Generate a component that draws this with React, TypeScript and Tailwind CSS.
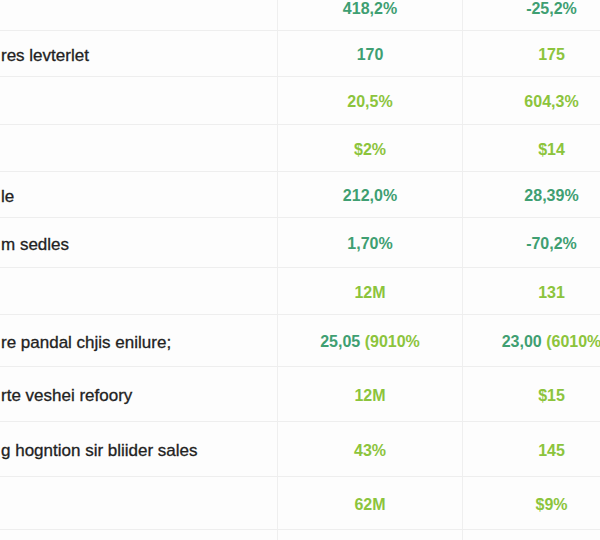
import React from "react";

type Seg = { t: string; c: "teal" | "lime" };
type Row = { label: string; h: string; a: Seg[]; b: Seg[] };

const T = (t: string): Seg[] => [{ t, c: "teal" }];
const L = (t: string): Seg[] => [{ t, c: "lime" }];

const rows: Row[] = [
  { label: "", h: "h-[47px]", a: T("418,2%"), b: T("-25,2%") },
  { label: "res levterlet", h: "h-[46px]", a: T("170"), b: L("175") },
  { label: "", h: "h-[48px]", a: L("20,5%"), b: L("604,3%") },
  { label: "", h: "h-[47px]", a: L("$2%"), b: L("$14") },
  { label: "le", h: "h-[46px]", a: T("212,0%"), b: T("28,39%") },
  { label: "m sedles", h: "h-[50px]", a: T("1,70%"), b: T("-70,2%") },
  { label: "", h: "h-[47px]", a: L("12M"), b: L("131") },
  {
    label: "re pandal chjis enilure;",
    h: "h-[52px]",
    a: [
      { t: "25,05 ", c: "teal" },
      { t: "(9010%", c: "lime" },
    ],
    b: [
      { t: "23,00 ", c: "teal" },
      { t: "(6010%", c: "lime" },
    ],
  },
  { label: "rte veshei refoory", h: "h-[55px]", a: L("12M"), b: L("$15") },
  { label: "g hogntion sir bliider sales", h: "h-[55px]", a: L("43%"), b: L("145") },
  { label: "", h: "h-[53px]", a: L("62M"), b: L("$9%") },
  { label: "", h: "h-[47px]", a: [], b: [] },
];

function Cell({ segs }: { segs: Seg[] }) {
  return (
    <span className="whitespace-nowrap">
      {segs.map((s, i) => (
        <span
          key={i}
          className={s.c === "teal" ? "text-[#3f9f72]" : "text-[#8cc43c]"}
        >
          {s.t}
        </span>
      ))}
    </span>
  );
}

export default function App() {
  return (
    <div
      className="w-[600px] h-[540px] overflow-hidden bg-[#fdfdfd]"
      style={{ fontFamily: "'Liberation Sans', Arial, sans-serif" }}
    >
      <div className="-mt-[16px] w-[640px]">
        {rows.map((r, i) => (
          <div
            key={i}
            className={`flex ${r.h} border-b border-[#eeeeee]`}
          >
            <div className="w-[278px] flex items-center pl-[1px] pt-[4px] border-r border-[#efefef] text-[17px] text-[#222222] whitespace-nowrap overflow-hidden [-webkit-text-stroke:0.3px_#222222]">
              {r.label}
            </div>
            <div className="w-[185px] flex items-center justify-center border-r border-[#efefef] text-[16px] font-bold pt-[3px]">
              <Cell segs={r.a} />
            </div>
            <div className="w-[177px] flex items-center justify-center text-[16px] font-bold pt-[3px]">
              <Cell segs={r.b} />
            </div>
          </div>
        ))}
      </div>
    </div>
  );
}
